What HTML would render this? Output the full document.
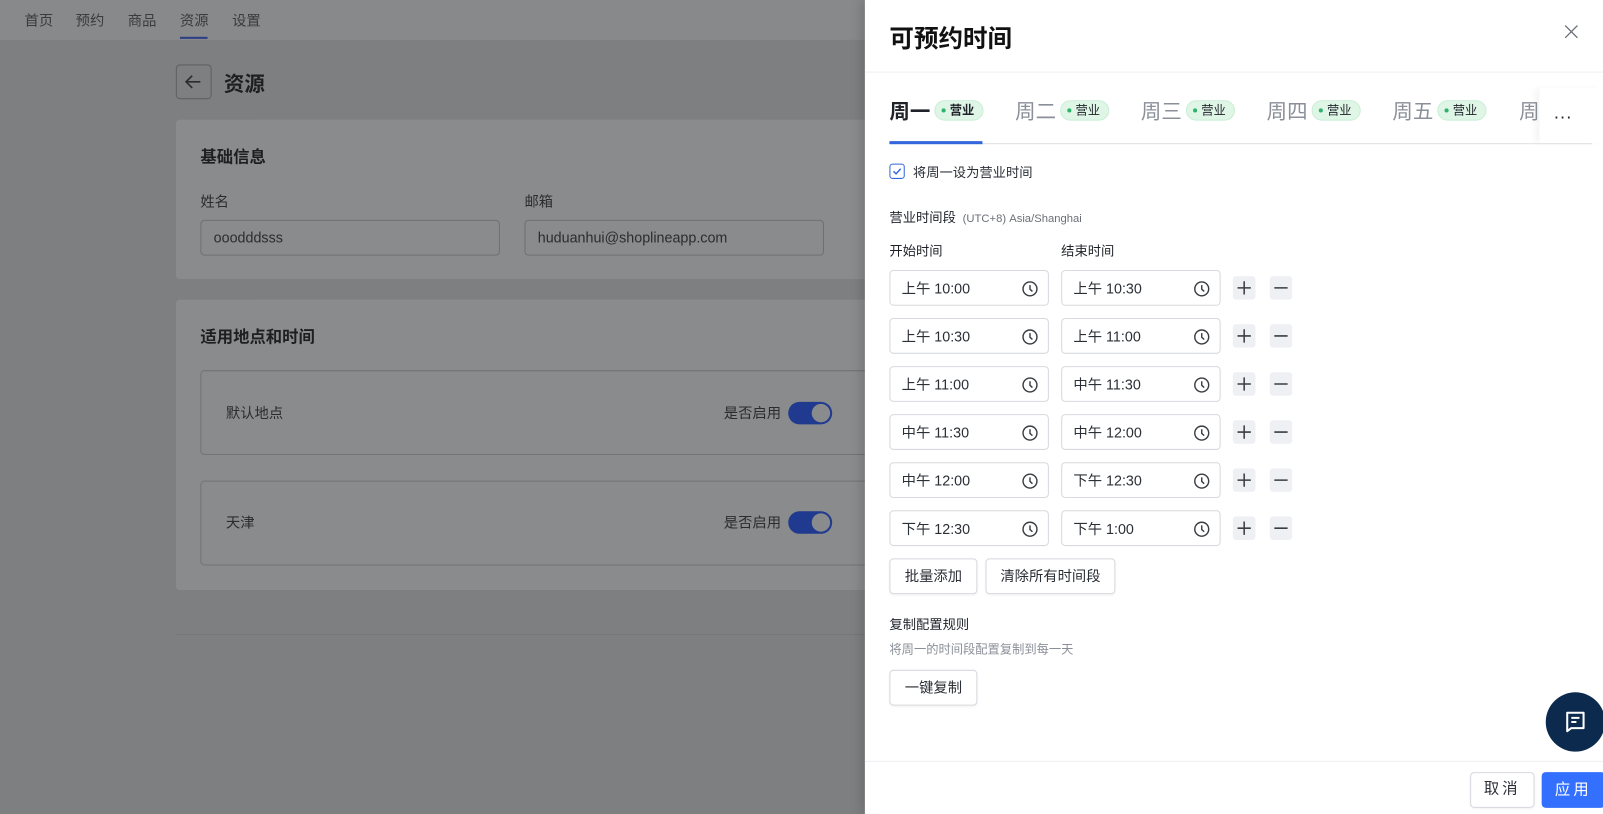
<!DOCTYPE html>
<html><head><meta charset="utf-8"><style>
*{box-sizing:border-box;margin:0;padding:0}
html,body{width:1603px;height:814px;overflow:hidden;background:#7e7f81}
body{font-family:"Liberation Sans","Noto Sans CJK SC",sans-serif;color:#1f2329}
#w{position:absolute;left:0;top:0;width:1568px;height:796px;transform:scale(1.02232,1.02261);transform-origin:0 0;background:#7e7f81}
.a{position:absolute}
.nav{left:0;top:0;width:860px;height:39px;background:#88898b}
.nv{top:10px;font-size:14px;color:#3a3b3d}
.card{background:#8a8b8d;border-radius:4px}
.inp{border:1px solid #6f7073;border-radius:4px;height:35px;font-size:14px;color:#2b2c2e;padding:8px 12px;background:#8a8b8d}
.panel{left:846px;top:0;width:722px;height:796px;background:#fff;box-shadow:-4px 0 10px rgba(0,0,0,.15)}
.tab{top:97px;font-size:20px;color:#8a8f99;line-height:26px}
.badge{display:inline-block;vertical-align:middle;height:20px;border-radius:10px;background:#dff6e7;border:1px solid #c8eed4;font-size:12px;color:#1f2329;line-height:18px;padding:0 8px 0 6px;margin-left:4px;position:relative;top:-3px}
.badge i{display:inline-block;width:4px;height:4px;border-radius:50%;background:#2fb36b;vertical-align:middle;margin-right:4px;position:relative;top:-1px}
.ti{width:156px;height:35px;border:1px solid #d6d9de;border-radius:4px;font-size:14px;color:#2b2f36;padding:7px 11px}
.ti svg{position:absolute;right:9px;top:9px}
.pm{width:22px;height:23px;background:#eef0f4;border-radius:3px}
.btn{border:1px solid #d6d9de;border-radius:4px;font-size:14px;color:#2b2f36;text-align:center;line-height:32px;background:#fff;box-shadow:0 1px 2px rgba(0,0,0,.05)}
</style></head><body><div id="w">
<div class="a nav"></div>
<div class="a nv" style="left:24px">首页</div>
<div class="a nv" style="left:74px">预约</div>
<div class="a nv" style="left:125px">商品</div>
<div class="a nv" style="left:176px">资源</div>
<div class="a" style="left:176px;top:36px;width:27px;height:2px;background:#2c3f86"></div>
<div class="a nv" style="left:227px">设置</div>

<div class="a" style="left:172px;top:63px;width:35px;height:34px;border:1px solid #5f6063;border-radius:4px"><svg width="33" height="32" viewBox="0 0 33 32"><path d="M23 16H10M15 10l-6 6 6 6" stroke="#2b2c2e" stroke-width="1.6" fill="none"/></svg></div>
<div class="a" style="left:219px;top:66px;font-size:20px;font-weight:bold;color:#1e1f21">资源</div>

<div class="a card" style="left:172px;top:117px;width:700px;height:156px"></div>
<div class="a" style="left:196px;top:140px;font-size:16px;font-weight:bold;color:#1e1f21">基础信息</div>
<div class="a" style="left:196px;top:187px;font-size:14px;color:#2b2c2e">姓名</div>
<div class="a" style="left:513px;top:187px;font-size:14px;color:#2b2c2e">邮箱</div>
<div class="a inp" style="left:196px;top:215px;width:293px">ooodddsss</div>
<div class="a inp" style="left:513px;top:215px;width:293px">huduanhui@shoplineapp.com</div>

<div class="a card" style="left:172px;top:293px;width:700px;height:284px"></div>
<div class="a" style="left:196px;top:316px;font-size:16px;font-weight:bold;color:#1e1f21">适用地点和时间</div>
<div class="a" style="left:196px;top:362px;width:680px;height:83px;border:1px solid #727376;border-radius:4px"></div>
<div class="a" style="left:196px;top:470px;width:680px;height:83px;border:1px solid #727376;border-radius:4px"></div>
<div class="a" style="left:221px;top:394px;font-size:14px;color:#2b2c2e">默认地点</div>
<div class="a" style="left:221px;top:501px;font-size:14px;color:#2b2c2e">天津</div>
<div class="a" style="left:708px;top:394px;font-size:14px;color:#2b2c2e">是否启用</div>
<div class="a" style="left:708px;top:501px;font-size:14px;color:#2b2c2e">是否启用</div>
<div class="a" style="left:771px;top:393px;width:43px;height:22px;border-radius:11px;background:#1f3a8f"><div class="a" style="right:2px;top:2px;width:18px;height:18px;border-radius:50%;background:#8a8b8d"></div></div>
<div class="a" style="left:771px;top:500px;width:43px;height:22px;border-radius:11px;background:#1f3a8f"><div class="a" style="right:2px;top:2px;width:18px;height:18px;border-radius:50%;background:#8a8b8d"></div></div>
<div class="a" style="left:172px;top:620px;width:680px;height:1px;background:#76777a"></div>

<div class="a panel">
<div class="a" style="left:24px;top:18px;font-size:24px;font-weight:bold;color:#111">可预约时间</div>
<svg class="a" style="left:684px;top:24px" width="14" height="14" viewBox="0 0 14 14"><path d="M1 1l12 12M13 1L1 13" stroke="#6b6f76" stroke-width="1.3"/></svg>
<div class="a" style="left:0;top:70px;width:722px;height:1px;background:#eceef1"></div>

<div class="a tab" style="left:24px;color:#1f2329;font-weight:bold">周一<span class="badge"><i></i>营业</span></div>
<div class="a tab" style="left:147px">周二<span class="badge"><i></i>营业</span></div>
<div class="a tab" style="left:270px">周三<span class="badge"><i></i>营业</span></div>
<div class="a tab" style="left:393px">周四<span class="badge"><i></i>营业</span></div>
<div class="a tab" style="left:516px">周五<span class="badge"><i></i>营业</span></div>
<div class="a tab" style="left:640px">周六</div>
<div class="a" style="left:660px;top:86px;width:62px;height:54px;background:#fff;box-shadow:-5px 0 6px rgba(0,0,0,.04)"></div>
<div class="a" style="left:674px;top:100px;font-size:18px;color:#1f2329;letter-spacing:1px">...</div>
<div class="a" style="left:24px;top:140px;width:687px;height:1px;background:#dee0e3"></div>
<div class="a" style="left:24px;top:138px;width:91px;height:3px;background:#3366dd"></div>

<div class="a" style="left:24px;top:160px;width:15px;height:15px;border:1px solid #3366dd;border-radius:3px"><svg width="13" height="13" viewBox="0 0 13 13"><path d="M3 6.5l2.5 2.5L10 4" stroke="#3366dd" stroke-width="1.4" fill="none"/></svg></div>
<div class="a" style="left:47px;top:158px;font-size:13px;color:#2b2f36">将周一设为营业时间</div>
<div class="a" style="left:24px;top:202px;font-size:13px;color:#1f2329">营业时间段 <span style="font-size:11px;color:#6b6f76;margin-left:3px">(UTC+8) Asia/Shanghai</span></div>
<div class="a" style="left:24px;top:235px;font-size:13px;color:#1f2329">开始时间</div>
<div class="a" style="left:192px;top:235px;font-size:13px;color:#1f2329">结束时间</div>

<div id="rows"></div>

<div class="a btn" style="left:24px;top:546px;width:86px;height:35px">批量添加</div>
<div class="a btn" style="left:118px;top:546px;width:127px;height:35px">清除所有时间段</div>
<div class="a" style="left:24px;top:600px;font-size:13px;color:#1f2329">复制配置规则</div>
<div class="a" style="left:24px;top:626px;font-size:12px;color:#8a8f99">将周一的时间段配置复制到每一天</div>
<div class="a btn" style="left:24px;top:655px;width:86px;height:35px">一键复制</div>
<div class="a" style="left:0;top:744px;width:722px;height:1px;background:#eceef1"></div>
<div class="a btn" style="left:592px;top:755px;width:63px;height:35px;font-size:15px;letter-spacing:3px">取消</div>
<div class="a" style="left:662px;top:755px;width:62px;height:35px;background:#3370ff;border-radius:4px;color:#fff;font-size:15px;text-align:center;line-height:35px;letter-spacing:3px">应用</div>
<div class="a" style="left:666px;top:677px;width:58px;height:58px;border-radius:50%;background:#0c2a4d"><svg class="a" style="left:17px;top:17px" width="24" height="24" viewBox="0 0 24 24"><path d="M4 3h16v15H8l-4 3z" stroke="#fff" stroke-width="2" fill="none" stroke-linejoin="round"/><path d="M8 8h8M8 12h5" stroke="#fff" stroke-width="2"/></svg></div>
</div>
</div>
<script>
var t=[["上午 10:00","上午 10:30"],["上午 10:30","上午 11:00"],["上午 11:00","中午 11:30"],["中午 11:30","中午 12:00"],["中午 12:00","下午 12:30"],["下午 12:30","下午 1:00"]];
var clk='<svg width="17" height="17" viewBox="0 0 17 17"><circle cx="8.5" cy="8.5" r="6.8" stroke="#3a3d42" stroke-width="1.4" fill="none"/><path d="M8.5 4.8v4l2.4 2.2" stroke="#3a3d42" stroke-width="1.4" fill="none"/></svg>';
var h='';
t.forEach(function(r,i){var y=264+i*47;
h+='<div class="a ti" style="left:24px;top:'+y+'px">'+r[0]+clk+'</div>';
h+='<div class="a ti" style="left:192px;top:'+y+'px">'+r[1]+clk+'</div>';
h+='<div class="a pm" style="left:360px;top:'+(y+6)+'px"><svg width="22" height="23" viewBox="0 0 22 23"><path d="M11 5v13M4.5 11.5h13" stroke="#3a3d42" stroke-width="1.5"/></svg></div>';
h+='<div class="a pm" style="left:396px;top:'+(y+6)+'px"><svg width="22" height="23" viewBox="0 0 22 23"><path d="M4.5 11.5h13" stroke="#3a3d42" stroke-width="1.5"/></svg></div>';});
document.getElementById('rows').outerHTML=h;
</script>
</body></html>
